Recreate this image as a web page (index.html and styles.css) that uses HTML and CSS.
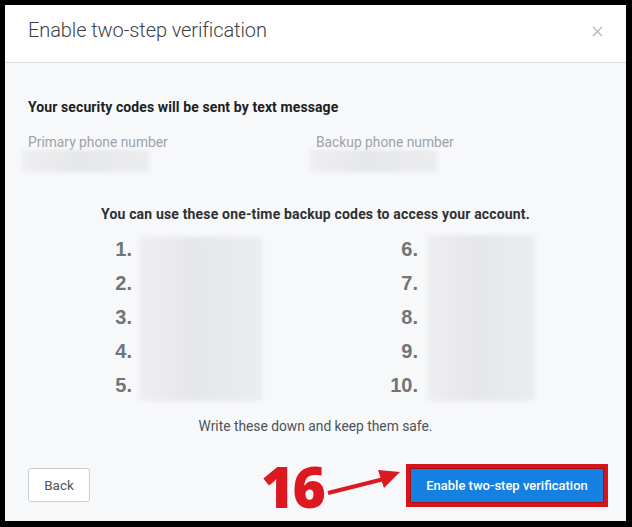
FILE: index.html
```html
<!DOCTYPE html>
<html lang="en">
<head>
    <meta charset="UTF-8">
    <title>Enable two-step verification</title>
    <link rel="stylesheet" href="styles.css">
</head>
<body>

    <div class="modal">
        <header class="modal-header">
            <h1>Enable two-step verification</h1>
            <span class="close">
                <svg width="11" height="11" viewBox="0 0 11 11"><path d="M1 1L10 10M10 1L1 10" stroke="#b4b8bc" stroke-width="1.4"/></svg>
            </span>
        </header>

        <div class="modal-body">
            <h2 class="section-title">Your security codes will be sent by text message</h2>

            <div class="phones">
                <div class="phone">
                    <span class="phone-label">Primary phone number</span>
                    <div class="blur phone-value"></div>
                </div>
                <div class="phone">
                    <span class="phone-label">Backup phone number</span>
                    <div class="blur phone-value"></div>
                </div>
            </div>

            <h2 class="codes-title">You can use these one-time backup codes to access your account.</h2>

            <div class="codes">
                <div class="code-col">
                    <ol class="nums">
                        <li>1.</li><li>2.</li><li>3.</li><li>4.</li><li>5.</li>
                    </ol>
                    <div class="blur code-block left"></div>
                </div>
                <div class="code-col right">
                    <ol class="nums">
                        <li>6.</li><li>7.</li><li>8.</li><li>9.</li><li>10.</li>
                    </ol>
                    <div class="blur code-block"></div>
                </div>
            </div>

            <p class="note">Write these down and keep them safe.</p>

            <div class="actions">
                <button class="btn-back">Back</button>
                <button class="btn-enable">Enable two-step verification</button>

                <span class="step-num">16</span>
                <svg class="step-arrow" width="80" height="30" viewBox="0 0 80 30">
                    <path d="M2 25L58 11" stroke="#dc1820" stroke-width="4"/>
                    <path d="M52 2L74 4L58 20Z" fill="#dc1820"/>
                </svg>
            </div>
        </div>
    </div>

</body>
</html>
```

FILE: styles.css
```css
body {
    margin: 0;
    padding: 5px 6px 6px 5px;
    background-color: #000;
    font-family: Roboto, "Liberation Sans", sans-serif;
}
.modal {
    height: 516px;
    display: flex;
    flex-direction: column;
    background-color: #f7f8fa;
}
.modal-header {
    height: 57px;
    background-color: #fff;
    border-bottom: 1px solid #d9dadd;
    display: flex;
    align-items: center;
    justify-content: space-between;
    padding: 0 23px;
    flex-shrink: 0;
}
.modal-header h1 {
    margin: 0 0 8px 0;
    font-size: 20px;
    font-weight: 300;
    color: #3c4248;
    letter-spacing: -0.1px;
}
.close {
    display: flex;
    margin: 0 0 4px 0;
}
.modal-body {
    flex: 1;
    padding: 36px 23px 0 23px;
    position: relative;
}
.section-title {
    margin: 0;
    font-size: 14px;
    line-height: 16px;
    font-weight: 700;
    color: #1e1e1e;
    letter-spacing: 0.1px;
}
.phones {
    display: grid;
    grid-template-columns: 288px 1fr;
    margin-top: 19px;
}
.phone-label {
    display: block;
    font-size: 13.8px;
    line-height: 16px;
    color: #9ea2a6;
}
.phone-value {
    width: 127px;
    height: 22px;
    margin: 0 0 0 -6px;
}
.blur {
    background: linear-gradient(90deg, #eeeef0, #e6e7e9 45%, #ebecee);
    filter: blur(2px);
}
.codes-title {
    margin: 34px 0 0 0;
    text-align: center;
    font-size: 14px;
    line-height: 16px;
    font-weight: 700;
    color: #2e3033;
    letter-spacing: 0.17px;
}
.codes {
    display: flex;
    margin: 11px 0 0 74px;
    gap: 126px;
}
.code-col {
    display: flex;
    gap: 7px;
    align-items: flex-start;
}
.code-col.right {
    gap: 9px;
}
.nums {
    list-style: none;
    margin: -1px 0 0 0;
    padding: 0;
    width: 30px;
    text-align: right;
}
.nums li {
    height: 34px;
    line-height: 34px;
    font-size: 20px;
    font-weight: 700;
    color: #727578;
    font-family: "Liberation Sans", Arial, sans-serif;
}
.code-block {
    width: 108px;
    height: 166px;
    margin-top: 2px;
}
.code-block.left {
    width: 123px;
    height: 164px;
    margin-top: 4px;
}
.note {
    margin: 16px 0 0 0;
    text-align: center;
    font-size: 13.8px;
    line-height: 16px;
    color: #4d5358;
}
.actions {
    display: flex;
    justify-content: space-between;
    align-items: center;
    margin-top: 34px;
    position: relative;
}
.btn-back {
    height: 34px;
    width: 62px;
    background-color: #fff;
    border: 1px solid #c9cdd1;
    border-radius: 3px;
    font-family: inherit;
    font-size: 13.5px;
    color: #50565b;
}
.btn-enable {
    height: 33px;
    width: 192px;
    background-color: #1380e2;
    border: none;
    font-family: inherit;
    font-size: 13px;
    font-weight: 500;
    color: #fff;
    box-shadow: 0 0 0 1px #a80d14;
    outline: 4px solid #d7141c;
    outline-offset: 1px;
}
.step-num {
    position: absolute;
    left: 233px;
    top: -10px;
    font-family: "Open Sans", sans-serif;
    font-weight: 800;
    font-size: 57px;
    line-height: 57px;
    color: #dc1820;
    letter-spacing: -2px;
}
.step-arrow {
    position: absolute;
    left: 298px;
    top: 0;
}
```
